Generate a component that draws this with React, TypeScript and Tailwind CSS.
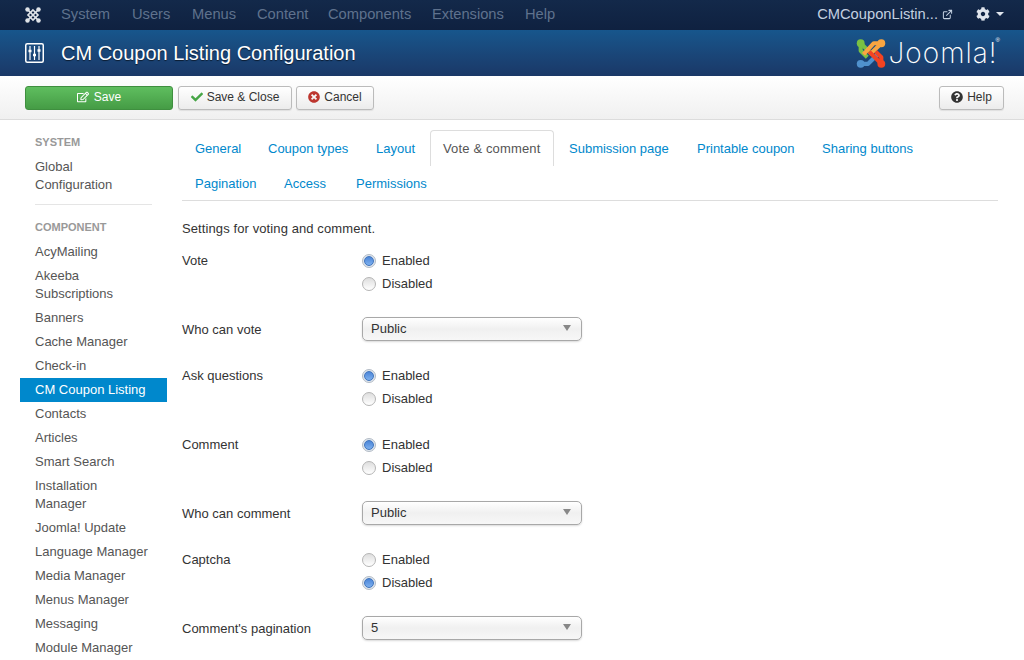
import React from 'react';
import { FaCheck, FaCog, FaQuestionCircle, FaRegEdit, FaTimesCircle } from 'react-icons/fa';
import { ExternalLink } from 'lucide-react';

const topMenu = [
  { name: 'System', w: 'w-[71px]' },
  { name: 'Users', w: 'w-[60px]' },
  { name: 'Menus', w: 'w-[65px]' },
  { name: 'Content', w: 'w-[71px]' },
  { name: 'Components', w: 'w-[104px]' },
  { name: 'Extensions', w: 'w-[93px]' },
  { name: 'Help', w: 'w-[40px]' },
];
const tabsFirst = [
  { name: 'General', w: 'w-[73px]' },
  { name: 'Coupon types', w: 'w-[108px]' },
  { name: 'Layout', w: 'w-[67px]' },
  { name: 'Vote & comment', w: 'w-[126px]' },
  { name: 'Submission page', w: 'w-[128px]' },
  { name: 'Printable coupon', w: 'w-[125px]' },
  { name: 'Sharing buttons', w: 'w-[120px]' },
];
const tabsSecond = [
  { name: 'Pagination', w: 'w-[89px]' },
  { name: 'Access', w: 'w-[72px]' },
  { name: 'Permissions', w: 'w-[100px]' },
];
const components = [
  'AcyMailing', 'Akeeba Subscriptions', 'Banners', 'Cache Manager', 'Check-in', 'CM Coupon Listing', 'Contacts', 'Articles',
  'Smart Search', 'Installation Manager', 'Joomla! Update', 'Language Manager', 'Media Manager', 'Menus Manager', 'Messaging', 'Module Manager',
];

// small white logo in the top bar: X with a hollow middle and round ends
const NavMark: React.FC = () => (
  <svg width="16" height="16" viewBox="0 0 32 32" fill="none" stroke="#dfe3e8" strokeWidth="3.4">
    <path d="M5 5L27 27M27 5L5 27" />
    <path d="M16 6L26 16L16 26L6 16Z" />
    <g fill="#dfe3e8" stroke="none">
      <circle cx="5" cy="5" r="4.5" />
      <circle cx="27" cy="5" r="4.5" />
      <circle cx="27" cy="27" r="4.5" />
      <circle cx="5" cy="27" r="4.5" />
    </g>
  </svg>
);

// coloured logo: four bent arms, each with a round end
const JoomlaMark: React.FC = () => (
  <svg width="30" height="31" viewBox="0 0 32 32" fill="none" strokeWidth="4.4" strokeLinejoin="round">
    <path d="M5 5L5 13L12 20" stroke="#7ac143" />
    <path d="M5 5L17 17" stroke="#7ac143" />
    <circle cx="5" cy="5" r="4.2" fill="#7ac143" />
    <path d="M5 27L13 27L24 16" stroke="#5091cd" />
    <circle cx="5" cy="27" r="4.2" fill="#5091cd" />
    <path d="M27 5L19 5L8 17" stroke="#f9a541" />
    <path d="M27 5L17 15" stroke="#f9a541" />
    <circle cx="27" cy="5" r="4.2" fill="#f9a541" />
    <path d="M27 27L14 14" stroke="#f44321" />
    <path d="M27 27L27 20L21 14" stroke="#f44321" />
    <circle cx="27" cy="27" r="4.2" fill="#f44321" />
  </svg>
);

const Radios: React.FC<{ value: 'Enabled' | 'Disabled' }> = ({ value }) => (
  <div className="flex flex-col gap-[5px]">
    {(['Enabled', 'Disabled'] as const).map((o) => (
      <label key={o} className="flex items-center h-[18px] gap-[6px]">
        <span
          className={`w-[14px] h-[14px] rounded-full border flex items-center justify-center ${
            o === value
              ? 'border-[#b4bcc6] bg-[#dfe6ee]'
              : 'border-[#b5b5b5] bg-gradient-to-b from-[#dedede] to-white'
          }`}
        >
          {o === value && <span className="w-[10px] h-[10px] rounded-full border border-[#3f74bd] bg-gradient-to-b from-[#4b85d8] to-[#7db0ee]" />}
        </span>
        <span>{o}</span>
      </label>
    ))}
  </div>
);

const Select: React.FC<{ value: string }> = ({ value }) => (
  <div className="w-[220px] h-[24px] rounded-[5px] border border-[#a8a8a8] shadow-[0_1px_2px_rgba(0,0,0,0.15)] bg-gradient-to-b from-white via-[#f0f0f0] to-[#f7f7f7] flex items-center justify-between pl-2 pr-[10px]">
    <span>{value}</span>
    <span className="w-0 h-0 mb-[2px] border-x-[4px] border-x-transparent border-t-[6px] border-t-[#888]" />
  </div>
);

const Row: React.FC<{ label: string; className: string; children: React.ReactNode; selectRow?: boolean }> = ({ label, className, children, selectRow }) => (
  <div className={`flex ${className}`}>
    <div className={`w-[180px] ${selectRow ? 'pt-[4px]' : ''}`}>{label}</div>
    {children}
  </div>
);

const toolBtn = 'h-[24px] rounded-[3px] bg-gradient-to-b from-white to-[#ececec] border border-[#bbb] shadow-[0_1px_1px_rgba(0,0,0,0.08)] flex items-center justify-center gap-[4px] text-[12px] pb-[1px]';

export default function App() {
  return (
    <div className="w-[1024px] h-[660px] overflow-hidden bg-white text-[13px] leading-[18px] text-[#333] font-['Liberation_Sans',Arial,sans-serif]">
      {/* top nav */}
      <div className="h-[30px] bg-gradient-to-b from-[#13294a] to-[#0f2140] flex items-center text-[14.7px] pb-[2px]">
        <div className="ml-[25px] w-[36px] pt-[1px]">
          <NavMark />
        </div>
        <nav className="flex text-[#5f728d]">
          {topMenu.map((m) => (
            <span key={m.name} className={m.w}>{m.name}</span>
          ))}
        </nav>
        <div className="ml-auto flex items-center text-[#c3d0e0]">
          <span>CMCouponListin...</span>
          <ExternalLink className="w-[11px] h-[11px] ml-[4px]" strokeWidth={2.2} />
          <FaCog className="w-[14px] h-[14px] ml-[23px] text-[#dfe5ed]" />
          <span className="ml-[6px] mr-[20px] w-0 h-0 border-x-[4px] border-x-transparent border-t-[4px] border-t-[#dfe5ed]" />
        </div>
      </div>

      {/* title bar */}
      <div className="h-[46px] bg-gradient-to-b from-[#17568c] to-[#1a3867] flex items-center pl-[25px] text-white">
        <svg width="19" height="20" viewBox="0 0 19 20" fill="none" stroke="currentColor" className="mr-[17px]">
          <rect x="0.75" y="0.75" width="17.5" height="18.5" rx="1.5" strokeWidth="1.5" />
          <path d="M5 3v14M9.5 3v14M14 3v14" strokeWidth="1.2" />
          <path d="M3.5 8h3M8 12h3M12.5 7.5h3" strokeWidth="2.4" />
        </svg>
        <h1 className="text-[20px] [text-shadow:0_1px_1px_rgba(0,0,0,0.6)]">CM Coupon Listing Configuration</h1>
        <div className="ml-auto mr-[24px] flex items-center gap-[3px]">
          <JoomlaMark />
          <span className="text-[28px] leading-[30px] font-['Inter',sans-serif] font-extralight tracking-[1px]">Joomla!</span>
          <span className="self-start mt-[-2px] ml-[-5px] text-[6px] leading-[8px]">®</span>
        </div>
      </div>

      {/* toolbar */}
      <div className="h-[44px] bg-gradient-to-b from-white to-[#f0f0f0] border-b border-[#dcdcdc] flex items-center pl-[25px] pr-[20px]">
        <button className="w-[148px] h-[24px] rounded-[3px] bg-gradient-to-b from-[#5fbe5f] to-[#459c45] border border-[#3f8f3f] text-white flex items-center justify-center gap-[5px] text-[12px] pb-[1px]">
          <FaRegEdit className="w-[12px] h-[12px]" />
          Save
        </button>
        <button className={`ml-[5px] w-[114px] ${toolBtn}`}>
          <FaCheck className="w-[12px] h-[12px] text-[#46a546]" />
          Save &amp; Close
        </button>
        <button className={`ml-[4px] w-[78px] ${toolBtn}`}>
          <FaTimesCircle className="w-[12px] h-[12px] text-[#bd362f]" />
          Cancel
        </button>
        <button className={`ml-auto w-[65px] ${toolBtn}`}>
          <FaQuestionCircle className="w-[12px] h-[12px] text-[#333]" />
          Help
        </button>
      </div>

      <div className="flex">
        {/* sidebar */}
        <aside className="w-[147px] ml-[20px] pt-[13px] shrink-0 text-[#555]">
          <div className="px-[15px] text-[11px] font-bold text-[#999] leading-[18px]">SYSTEM</div>
          <div className="px-[15px] py-[3px] mt-[4px]">Global Configuration</div>
          <div className="mx-[15px] mt-[7px] mb-[13px] border-t border-[#e5e5e5]" />
          <div className="px-[15px] text-[11px] font-bold text-[#999] leading-[18px]">COMPONENT</div>
          <div className="mt-[4px]">
            {components.map((c) => (
              <div key={c} className={`px-[15px] py-[3px] ${c === 'CM Coupon Listing' ? 'bg-[#0088cc] text-white' : ''}`}>
                {c}
              </div>
            ))}
          </div>
        </aside>

        {/* main */}
        <main className="ml-[15px] w-[816px] shrink-0">
          <div className="border-b border-[#ddd] pt-[10px] h-[81px]">
            <div className="flex h-[36px] text-[#0088cc]">
              {tabsFirst.map((t) => (
                <div key={t.name} className={`${t.w} shrink-0`}>
                  <span
                    className={`block w-fit h-[36px] pt-[9px] ${
                      t.name === 'Vote & comment' ? 'pl-[12px] pr-[13px] tracking-[0.15px] text-[#555] border border-b-0 border-[#ddd] rounded-t-[4px] bg-white' : 'px-[13px] pt-[10px]'
                    }`}
                  >
                    {t.name}
                  </span>
                </div>
              ))}
            </div>
            <div className="flex text-[#0088cc] pt-[9px]">
              {tabsSecond.map((t) => (
                <span key={t.name} className={`${t.w} px-[13px] shrink-0`}>
                  {t.name}
                </span>
              ))}
            </div>
          </div>

          <p className="mt-[19px] tracking-[0.1px]">Settings for voting and comment.</p>
          <Row label="Vote" className="mt-[14px]"><Radios value="Enabled" /></Row>
          <Row label="Who can vote" className="mt-[24px]" selectRow><Select value="Public" /></Row>
          <Row label="Ask questions" className="mt-[26px]"><Radios value="Enabled" /></Row>
          <Row label="Comment" className="mt-[28px]"><Radios value="Enabled" /></Row>
          <Row label="Who can comment" className="mt-[24px]" selectRow><Select value="Public" /></Row>
          <Row label="Captcha" className="mt-[26px]"><Radios value="Disabled" /></Row>
          <Row label="Comment's pagination" className="mt-[24px]" selectRow><Select value="5" /></Row>
        </main>
      </div>
    </div>
  );
}
